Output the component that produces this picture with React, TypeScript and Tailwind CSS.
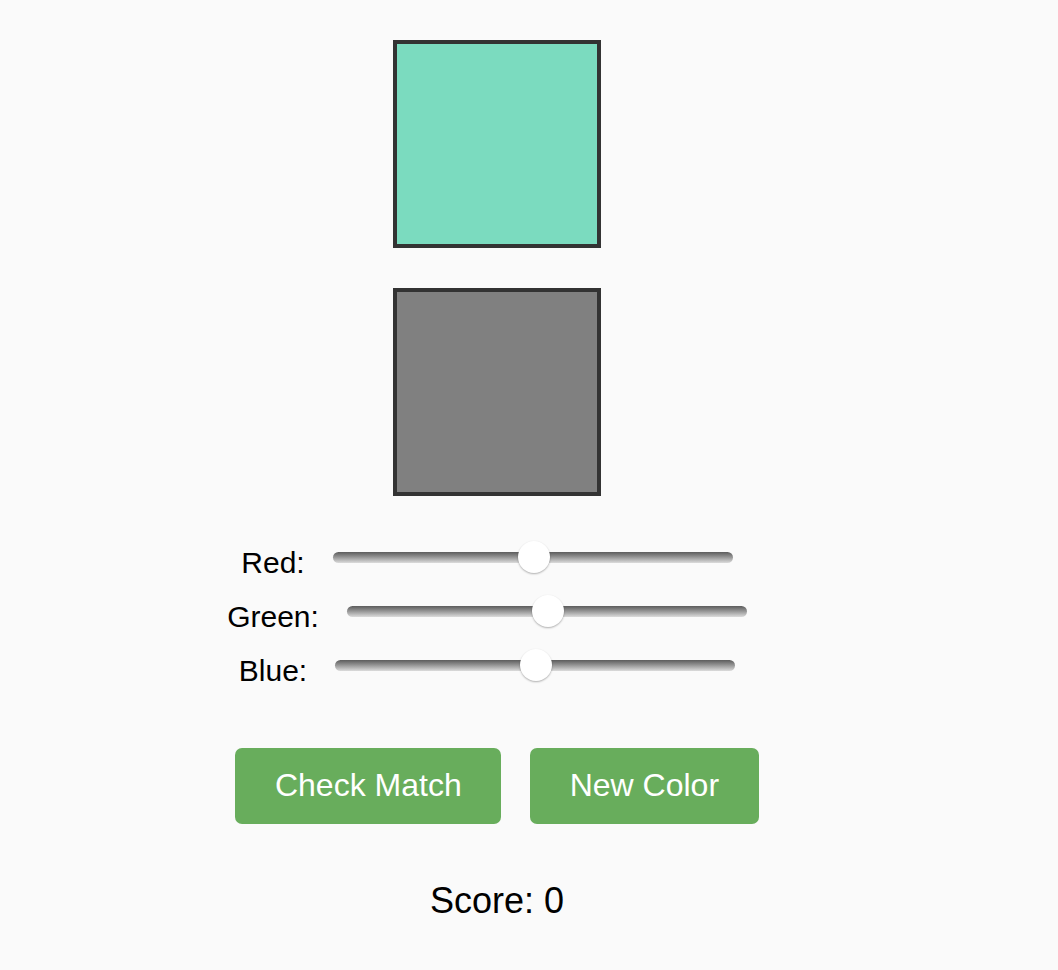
import React from "react";

function Slider({ pos }: { pos: number }) {
  return (
    <div className="relative w-[400px] h-[11px] rounded-full bg-linear-to-b from-[#5c5c5c] to-[#dcdcdc]">
      <div
        className="absolute top-1/2 w-[32px] h-[32px] -translate-y-1/2 rounded-full bg-white shadow-[0_1px_2px_rgba(0,0,0,0.3)]"
        style={{ left: `${pos}px` }}
      />
    </div>
  );
}

function Row({ label }: { label: string }) {
  return (
    <div className="flex items-center justify-center h-[54px]">
      <span className="text-[30px] leading-none text-black translate-y-[6px]">{label}</span>
      <div className="ml-[28px] mr-[20px]">
        <Slider pos={185} />
      </div>
    </div>
  );
}

export default function App() {
  return (
    <div className="min-h-screen bg-[#fafafa]" style={{ fontFamily: '"Liberation Sans", Arial, sans-serif' }}>
      <div className="w-[994px] flex flex-col items-center pt-[40px]">
        <div className="w-[208px] h-[208px] border-4 border-[#333333] bg-[#7bdbbf]" />
        <div className="mt-[40px] w-[208px] h-[208px] border-4 border-[#333333] bg-[#808080]" />
        <div className="mt-[34px] flex flex-col w-full">
          <Row label="Red:" />
          <Row label="Green:" />
          <Row label="Blue:" />
        </div>
        <div className="mt-[56px] flex gap-[29px]">
          <button className="h-[76px] px-[39.5px] pb-[2px] rounded-[7px] bg-[#68ad5c] text-white text-[32px]">Check Match</button>
          <button className="h-[76px] px-[39.5px] pb-[2px] rounded-[7px] bg-[#68ad5c] text-white text-[32px]">New Color</button>
        </div>
        <div className="mt-[59px] text-[36px] leading-none text-black">Score: 0</div>
      </div>
    </div>
  );
}
